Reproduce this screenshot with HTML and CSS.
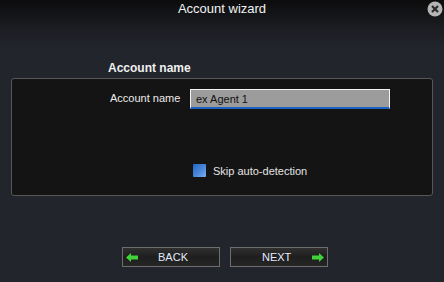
FILE: index.html
```html
<!DOCTYPE html>
<html lang="en">
<head>
    <meta charset="UTF-8">
    <title>Account wizard</title>
    <link rel="stylesheet" href="styles.css">
</head>
<body>
    <div class="wizard">
        <div class="titlebar">
            <span class="title">Account wizard</span>
            <button class="close-btn" aria-label="Close">
                <svg width="16" height="16" viewBox="0 0 16 16">
                    <circle cx="8" cy="8" r="7.5" fill="#b4b4b4"/>
                    <path d="M5 5 L11 11 M11 5 L5 11" stroke="#2a2a2a" stroke-width="2.2"/>
                </svg>
            </button>
        </div>
        <h2 class="section-title">Account name</h2>
        <div class="panel">
            <div class="field">
                <label for="account">Account name</label>
                <input type="text" id="account" value="ex Agent 1">
            </div>
            <label class="check">
                <span class="box"></span>
                Skip auto-detection
            </label>
        </div>
        <div class="buttons">
            <button class="nav-btn back">
                <svg class="arrow" width="12" height="9" viewBox="0 0 12 9">
                    <path d="M0 4.5 L5 0 L5 2.5 L12 2.5 L12 6.5 L5 6.5 L5 9 Z" fill="#3fd23a"/>
                </svg>
                BACK
            </button>
            <button class="nav-btn next">
                NEXT
                <svg class="arrow" width="12" height="9" viewBox="0 0 12 9">
                    <path d="M12 4.5 L7 0 L7 2.5 L0 2.5 L0 6.5 L7 6.5 L7 9 Z" fill="#3fd23a"/>
                </svg>
            </button>
        </div>
    </div>
</body>
</html>
```

FILE: styles.css
```css
html, body {
    margin: 0;
    height: 100%;
}
body {
    font-family: "Liberation Sans", Arial, sans-serif;
    background: linear-gradient(#0c0c0d 0, #1c1e23 30px, #22252c 50px, #22252c 100%);
    color: #e8e8e8;
}
.wizard {
    width: 444px;
    height: 282px;
    display: flex;
    flex-direction: column;
}
.titlebar {
    height: 17px;
    display: flex;
    justify-content: center;
    align-items: center;
    position: relative;
}
.title {
    font-size: 13px;
    color: #f2f2f2;
}
.close-btn {
    position: absolute;
    right: 1px;
    top: 1px;
    width: 16px;
    height: 16px;
    padding: 0;
    border: none;
    background: none;
    display: flex;
}
.section-title {
    margin: 44px 0 0 108px;
    font-size: 12px;
    font-weight: 700;
    color: #f0f0f0;
    line-height: 15px;
}
.panel {
    margin: 2px 11px 0 11px;
    height: 118px;
    box-sizing: border-box;
    background: #141414;
    border: 1px solid #575757;
    border-radius: 3px;
    display: flex;
    flex-direction: column;
}
.field {
    display: flex;
    align-items: center;
    margin: 10px 0 0 98px;
}
.field label {
    font-size: 11px;
    color: #ececec;
    width: 80px;
    box-sizing: border-box;
    padding: 0 11px 3px 0;
    text-align: right;
    white-space: nowrap;
}
.field input {
    width: 200px;
    height: 20px;
    box-sizing: border-box;
    margin: 0;
    padding: 0 0 0 5px;
    border: 1px solid #f4f4f4;
    border-bottom: 2px solid #1b62c4;
    background: #9c9c9c;
    color: #111;
    font-family: "Liberation Sans", Arial, sans-serif;
    font-size: 11px;
    outline: none;
}
.check {
    display: flex;
    align-items: center;
    gap: 7px;
    margin: 55px 0 0 181px;
    font-size: 11px;
    color: #e4e4e4;
}
.box {
    width: 13px;
    height: 13px;
    background: linear-gradient(135deg, #2466c4, #4a88dc 55%, #7cb0ee);
    border-radius: 1px;
}
.buttons {
    display: flex;
    gap: 10px;
    margin: 51px 0 0 122px;
}
.nav-btn {
    width: 98px;
    height: 20px;
    box-sizing: border-box;
    border: 1px solid #6e6e6e;
    background: linear-gradient(#303030, #1e1e1e 50%, #262626);
    color: #e2eafd;
    font-family: "Liberation Sans", Arial, sans-serif;
    font-size: 11px;
    padding: 0 3px;
    display: flex;
    align-items: center;
    justify-content: space-between;
}
.nav-btn.back {
    padding-right: 31px;
}
.nav-btn.next {
    padding-left: 31px;
}
```
